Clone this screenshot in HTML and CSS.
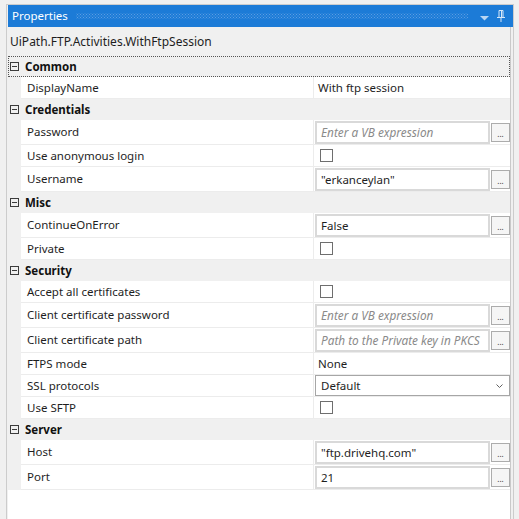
FILE: index.html
```html
<!DOCTYPE html>
<html>
<head>
<meta charset="utf-8">
<link rel="stylesheet" href="styles.css">
</head>
<body>
<div class="panel">
  <div class="titlebar">
    <span class="title">Properties</span>
    <span class="grip"></span>
    <span class="tb-icons">
      <svg class="ico-drop" width="9" height="5" viewBox="0 0 9 5"><path d="M0 0H9L4.5 4.5Z" fill="#b9d6f3"/></svg>
      <svg class="ico-pin" width="10" height="12" viewBox="0 0 10 12"><path d="M3 0.5H7V7.5H3Z" fill="none" stroke="#d6e7f8" stroke-width="1"/><path d="M5.5 0.5V7.5" stroke="#d6e7f8" stroke-width="1"/><path d="M1 7.5H9" stroke="#d6e7f8" stroke-width="1"/><path d="M5 7.5V12" stroke="#d6e7f8" stroke-width="1"/></svg>
    </span>
  </div>
  <div class="content">
    <div class="desc">UiPath.FTP.Activities.WithFtpSession</div>
    <div class="grid">
      <div class="cat focus"><span class="toggle"></span><span class="cat-name">Common</span></div>
      <div class="row"><div class="gutter"></div><div class="name">DisplayName</div><div class="val"><span class="plain">With ftp session</span></div></div>

      <div class="cat"><span class="toggle"></span><span class="cat-name">Credentials</span></div>
      <div class="row tall"><div class="gutter"></div><div class="name">Password</div><div class="val"><div class="field"><span class="ph">Enter a VB expression</span></div><div class="more">...</div></div></div>
      <div class="row"><div class="gutter"></div><div class="name">Use anonymous login</div><div class="val"><span class="check"></span></div></div>
      <div class="row tall"><div class="gutter"></div><div class="name">Username</div><div class="val"><div class="field"><span class="txt">"erkanceylan"</span></div><div class="more">...</div></div></div>

      <div class="cat"><span class="toggle"></span><span class="cat-name">Misc</span></div>
      <div class="row tall"><div class="gutter"></div><div class="name">ContinueOnError</div><div class="val"><div class="field"><span class="txt">False</span></div><div class="more">...</div></div></div>
      <div class="row"><div class="gutter"></div><div class="name">Private</div><div class="val"><span class="check"></span></div></div>

      <div class="cat"><span class="toggle"></span><span class="cat-name">Security</span></div>
      <div class="row"><div class="gutter"></div><div class="name">Accept all certificates</div><div class="val"><span class="check"></span></div></div>
      <div class="row tall"><div class="gutter"></div><div class="name">Client certificate password</div><div class="val"><div class="field"><span class="ph">Enter a VB expression</span></div><div class="more">...</div></div></div>
      <div class="row tall"><div class="gutter"></div><div class="name">Client certificate path</div><div class="val"><div class="field"><span class="ph">Path to the Private key in PKCS</span></div><div class="more">...</div></div></div>
      <div class="row"><div class="gutter"></div><div class="name">FTPS mode</div><div class="val"><span class="plain">None</span></div></div>
      <div class="row"><div class="gutter"></div><div class="name">SSL protocols</div><div class="val"><div class="select"><span class="txt">Default</span><svg class="chev" width="7" height="4" viewBox="0 0 7 4"><path d="M0.5 0.5L3.5 3.5L6.5 0.5" fill="none" stroke="#606060" stroke-width="1"/></svg></div></div></div>
      <div class="row"><div class="gutter"></div><div class="name">Use SFTP</div><div class="val"><span class="check"></span></div></div>

      <div class="cat"><span class="toggle"></span><span class="cat-name">Server</span></div>
      <div class="row tall"><div class="gutter"></div><div class="name">Host</div><div class="val"><div class="field"><span class="txt">"ftp.drivehq.com"</span></div><div class="more">...</div></div></div>
      <div class="row tall"><div class="gutter"></div><div class="name">Port</div><div class="val"><div class="field"><span class="txt">21</span></div><div class="more">...</div></div></div>
    </div>
  </div>
</div>
</body>
</html>
```

FILE: styles.css
```css
html, body {
  margin: 0;
  padding: 0;
  background: #f0f0f0;
}

body {
  font-family: "Noto Sans", "Open Sans", sans-serif;
  font-size: 11.5px;
  color: #1e1e1e;
}

.panel {
  margin: 4px 0 0 6px;
  width: 505px;
  height: 515px;
  padding-left: 1px;
  border: 1px solid #cccccc;
  border-bottom: 0;
  background: #f0f0f0;
  display: flex;
  flex-direction: column;
}

.titlebar {
  height: 22px;
  background: #1c7bd7;
  display: flex;
  align-items: center;
  flex: none;
}

.title {
  color: #ffffff;
  padding-left: 4px;
  font-size: 11.5px;
  margin-top: -2px;
}

.grip {
  flex: 1;
  height: 6px;
  margin: 0 12px 0 8px;
  background-image:
    radial-gradient(circle, #5c9de2 0.6px, transparent 0.9px),
    radial-gradient(circle, #5c9de2 0.6px, transparent 0.9px);
  background-size: 3px 3px, 3px 3px;
  background-position: 0 0, 1.5px 1.5px;
}

.tb-icons {
  display: flex;
  align-items: center;
  gap: 7px;
  padding-right: 7px;
}

.ico-drop {
  margin-top: 5px;
}

.ico-pin {
  margin-top: -1px;
}

.content {
  flex: 1;
  width: 502px;
  border-right: 1px solid #c9c9c9;
  display: flex;
  flex-direction: column;
}

.desc {
  height: 29px;
  display: flex;
  align-items: center;
  padding-left: 2px;
  padding-bottom: 1px;
  box-sizing: border-box;
  font-size: 12px;
  color: #1e1e1e;
  flex: none;
}

.grid {
  flex: 1;
  background: #ffffff;
  display: flex;
  flex-direction: column;
}

.cat {
  height: 21px;
  box-sizing: border-box;
  background: #f0f0f0;
  display: flex;
  align-items: center;
  flex: none;
}

.cat.focus {
  border: 1px dotted #555555;
}

.toggle {
  width: 9px;
  height: 9px;
  box-sizing: border-box;
  border: 1px solid #3c3c3c;
  margin-left: 2px;
  position: relative;
  background: #f0f0f0;
}

.cat.focus .toggle {
  margin-left: 1px;
}

.toggle::after {
  content: "";
  position: absolute;
  left: 1px;
  right: 1px;
  top: 3px;
  height: 1px;
  background: #3c3c3c;
}

.cat-name {
  font-weight: bold;
  margin-left: 6px;
  margin-top: -1px;
  color: #111111;
}

.row {
  height: 22px;
  box-sizing: border-box;
  display: flex;
  flex: none;
  border-bottom: 1px solid #ececec;
}

.row.tall {
  height: 25px;
}

.gutter {
  width: 13px;
  background: #f0f0f0;
  flex: none;
  margin-bottom: -1px;
}

.name {
  width: 286px;
  padding-left: 6px;
  padding-bottom: 1px;
  border-right: 1px solid #ececec;
  display: flex;
  align-items: center;
  flex: none;
  white-space: nowrap;
}

.val {
  flex: 1;
  display: flex;
  align-items: center;
  min-width: 0;
}

.plain {
  padding-left: 4px;
  margin-top: -1px;
}

.field {
  width: 175px;
  height: 23px;
  box-sizing: border-box;
  margin-left: 1px;
  border: 2px solid #d9d9d9;
  display: flex;
  align-items: center;
  padding-left: 4px;
  overflow: hidden;
  white-space: nowrap;
}

.ph {
  font-style: italic;
  color: #8a8a8a;
  font-size: 11.8px;
}

.txt {
  color: #1e1e1e;
}

.more {
  width: 19px;
  height: 19px;
  box-sizing: border-box;
  margin-left: 1px;
  border: 1px solid #acacac;
  background: #f5f5f5;
  display: flex;
  align-items: flex-end;
  justify-content: center;
  font-size: 8px;
  line-height: 8px;
  padding-bottom: 3px;
  color: #333333;
}

.check {
  width: 13px;
  height: 13px;
  box-sizing: border-box;
  border: 1px solid #6e6e6e;
  margin-left: 6px;
  background: #ffffff;
}

.select {
  width: 195px;
  height: 21px;
  box-sizing: border-box;
  margin-left: 1px;
  border: 1px solid #a6a6a6;
  display: flex;
  align-items: center;
  justify-content: space-between;
  padding: 0 6px 0 5px;
}
```
